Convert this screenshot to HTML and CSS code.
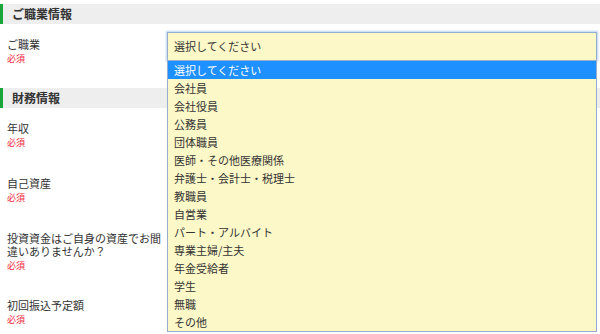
FILE: index.html
```html
<!DOCTYPE html>
<html lang="ja">
    <head>
        <meta charset="UTF-8">
        <meta name="viewport" content="width=device-width, initial-scale=1.0">
        <title>お客様情報</title>
        <link rel="stylesheet" href="styles.css">
    </head>
    <body>
        <h2 class="sec-title">ご職業情報</h2>
        <div class="row row-first">
            <div class="label">
                <span class="name">ご職業</span>
                <span class="req">必須</span>
            </div>
            <div class="field">
                <div class="select-box">選択してください</div>
                <ul class="options">
                    <li class="selected">選択してください</li>
                    <li>会社員</li>
                    <li>会社役員</li>
                    <li>公務員</li>
                    <li>団体職員</li>
                    <li>医師・その他医療関係</li>
                    <li>弁護士・会計士・税理士</li>
                    <li>教職員</li>
                    <li>自営業</li>
                    <li>パート・アルバイト</li>
                    <li>専業主婦/主夫</li>
                    <li>年金受給者</li>
                    <li>学生</li>
                    <li>無職</li>
                    <li>その他</li>
                </ul>
            </div>
        </div>

        <h2 class="sec-title">財務情報</h2>
        <div class="row">
            <div class="label">
                <span class="name">年収</span>
                <span class="req">必須</span>
            </div>
            <div class="field"></div>
        </div>
        <div class="row">
            <div class="label">
                <span class="name">自己資産</span>
                <span class="req">必須</span>
            </div>
            <div class="field"></div>
        </div>
        <div class="row">
            <div class="label">
                <span class="name">投資資金はご自身の資産でお間違いありませんか？</span>
                <span class="req">必須</span>
            </div>
            <div class="field"></div>
        </div>
        <div class="row">
            <div class="label">
                <span class="name">初回振込予定額</span>
                <span class="req">必須</span>
            </div>
            <div class="field"></div>
        </div>
    </body>
</html>
```

FILE: styles.css
```css
body {
    font-family: "Noto Sans CJK JP", "Noto Sans", sans-serif;
    color: #333;
    margin: 0;
    background: #fff;
}

.sec-title {
    margin: 4px 0 0;
    height: 20px;
    line-height: 20px;
    padding-left: 9px;
    background-color: #eeeeee;
    border-left: 3px solid #1aa63a;
    font-size: 12px;
    font-weight: bold;
}

.row {
    display: flex;
    align-items: flex-start;
    padding: 13px 0;
}

.row-first {
    padding: 8px 0 19px;
}

.label {
    width: 160px;
    padding: 1px 0 0 7px;
    flex-shrink: 0;
}

.row-first .label {
    padding-top: 6px;
}

.name {
    display: block;
    font-size: 11px;
    line-height: 13px;
}

.req {
    display: block;
    margin-top: 1px;
    font-size: 9px;
    line-height: 13px;
    color: #f0283c;
}

.field {
    position: relative;
    width: 430px;
    min-height: 29px;
}

.select-box {
    height: 27px;
    line-height: 27px;
    padding-left: 6px;
    border: 1px solid #96add0;
    background-color: #fdf8c8;
    box-shadow: 0 0 2px 1px #bcd3f2;
    font-size: 11px;
}

.options {
    position: absolute;
    top: 28px;
    left: 0;
    right: 0;
    margin: 0;
    padding: 0;
    list-style: none;
    border: 1px solid #96add0;
    background-color: #fdf8c8;
    z-index: 2;
}

.options li {
    height: 18px;
    line-height: 18px;
    padding-left: 6px;
    font-size: 11px;
}

.options .selected {
    background-color: #1e90ff;
    color: #fff;
}
```
